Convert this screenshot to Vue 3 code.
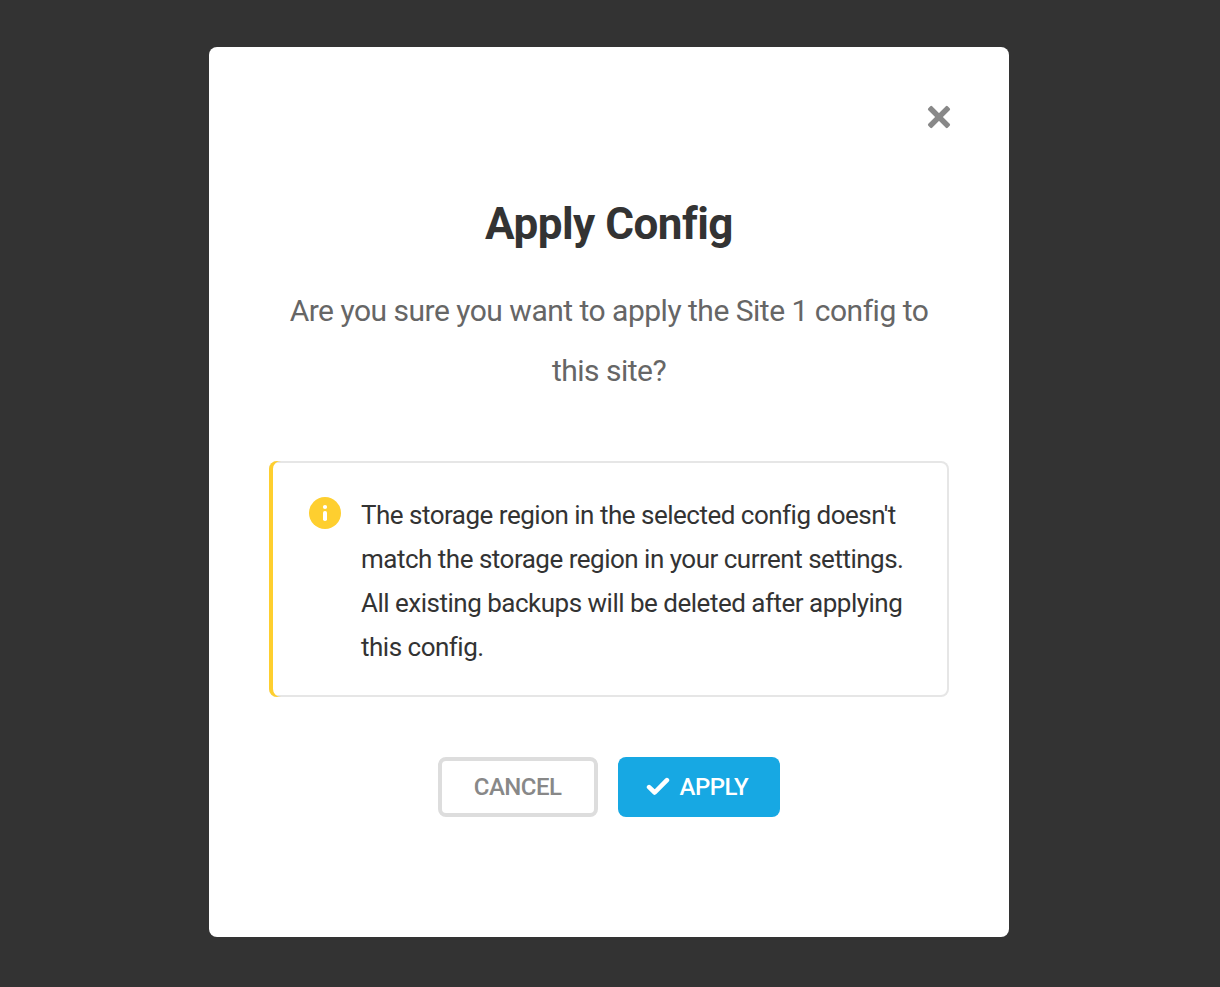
<script setup>
const closeDialog = () => {}
</script>

<template>
  <main class="overlay">
    <section class="dialog" role="dialog" aria-modal="true" aria-labelledby="title" aria-describedby="question">
      <header class="top">
        <button class="close" type="button" aria-label="Close" @click="closeDialog">
          <svg viewBox="-12 -12 24 24" width="24" height="24" fill="currentColor">
            <rect x="-13.7" y="-2.7" width="27.4" height="5.4" rx="1.3" transform="rotate(45)" />
            <rect x="-13.7" y="-2.7" width="27.4" height="5.4" rx="1.3" transform="rotate(-45)" />
          </svg>
        </button>
      </header>
      <h1 id="title">Apply Config</h1>
      <p id="question" class="question">Are you sure you want to apply the Site 1 config to this site?</p>
      <div class="notice" role="alert">
        <svg class="info" viewBox="0 0 32 32" width="32" height="32" aria-hidden="true">
          <circle cx="16" cy="16" r="16" fill="#fecf2f" />
          <circle cx="16" cy="10" r="2.1" fill="#fff" />
          <rect x="14" y="14" width="4" height="10" rx="1.8" fill="#fff" />
        </svg>
        <p>The storage region in the selected config doesn't match the storage region in your current settings. All existing backups will be deleted after applying this config.</p>
      </div>
      <footer class="actions">
        <button class="button cancel" type="button" @click="closeDialog">CANCEL</button>
        <button class="button apply" type="button" @click="closeDialog">
          <svg viewBox="0 0 24 24" width="24" height="24" fill="none" stroke="currentColor" stroke-width="4.6" stroke-linecap="round" stroke-linejoin="round" aria-hidden="true">
            <path d="M3.1 12.2 8.7 17.5 20.9 5.2" />
          </svg>
          APPLY
        </button>
      </footer>
    </section>
  </main>
</template>

<style>
body {
  background: #333;
}
</style>

<style scoped>
.overlay {
  box-sizing: border-box;
  min-height: 100vh;
  padding: 47px 22px 50px 20px;
  background: #333;
  font-family: Roboto, sans-serif;
}
.dialog {
  box-sizing: border-box;
  max-width: 800px;
  margin: 0 auto;
  padding: 50px 60px 120px;
  border-radius: 8px;
  background: #fff;
}
.top {
  display: flex;
  justify-content: flex-end;
  margin-right: -10px;
}
.close {
  display: grid;
  place-items: center;
  width: 40px;
  height: 40px;
  padding: 0;
  border: 0;
  background: none;
  color: #888;
  cursor: pointer;
}
h1 {
  margin: 57px 0 0;
  color: #333;
  font-size: 44px;
  font-weight: 700;
  line-height: 60px;
  text-align: center;
  letter-spacing: -0.5px;
}
.question {
  margin: 27px 0 60px;
  color: #666;
  font-size: 30px;
  line-height: 60px;
  text-align: center;
  letter-spacing: -0.5px;
}
.notice {
  display: flex;
  align-items: flex-start;
  gap: 20px;
  padding: 32px 38px 28px 40px;
  border-radius: 8px;
  box-shadow: inset 4px 0 #fecf2f, inset 0 0 0 2px #e6e6e6;
}
.info {
  flex: none;
  margin-top: 4px;
}
.notice p {
  margin: 0;
  color: #333;
  font-size: 26px;
  line-height: 44px;
  letter-spacing: -0.5px;
}
.actions {
  display: flex;
  justify-content: center;
  gap: 20px;
  margin-top: 60px;
}
.button {
  display: flex;
  align-items: center;
  justify-content: center;
  gap: 10px;
  box-sizing: border-box;
  height: 60px;
  border-radius: 8px;
  font-family: inherit;
  font-size: 24px;
  font-weight: 500;
  letter-spacing: -0.5px;
  cursor: pointer;
}
.cancel {
  padding: 0 32px;
  border: 4px solid #ddd;
  background: #fff;
  color: #888;
}
.apply {
  padding: 0 32px 0 28px;
  border: 0;
  background: #17a8e3;
  color: #fff;
}
</style>
